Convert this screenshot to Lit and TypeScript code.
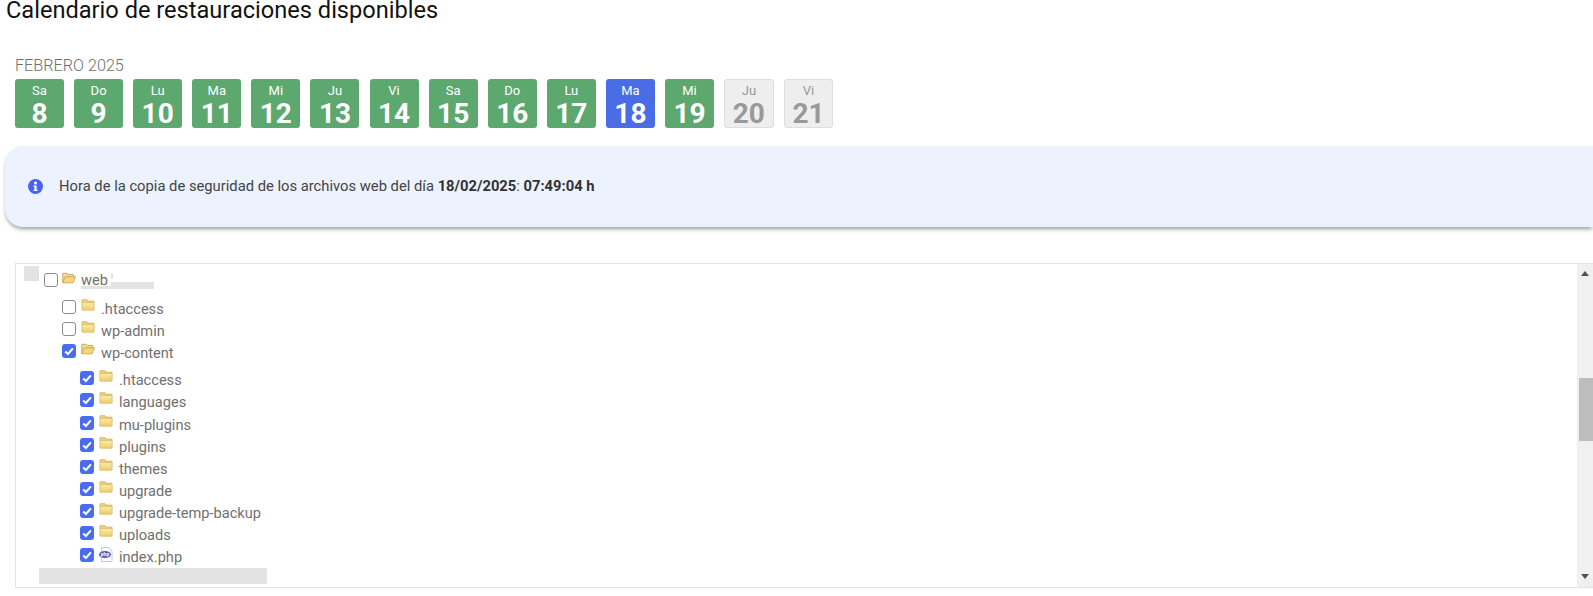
import { LitElement, html, css, svg } from "lit";
import { customElement } from "lit/decorators.js";

type Day = { n: string; d: number; kind: "ok" | "cur" | "off" };
const days: Day[] = [
  { n: "Sa", d: 8, kind: "ok" }, { n: "Do", d: 9, kind: "ok" }, { n: "Lu", d: 10, kind: "ok" },
  { n: "Ma", d: 11, kind: "ok" }, { n: "Mi", d: 12, kind: "ok" }, { n: "Ju", d: 13, kind: "ok" },
  { n: "Vi", d: 14, kind: "ok" }, { n: "Sa", d: 15, kind: "ok" }, { n: "Do", d: 16, kind: "ok" },
  { n: "Lu", d: 17, kind: "ok" }, { n: "Ma", d: 18, kind: "cur" }, { n: "Mi", d: 19, kind: "ok" },
  { n: "Ju", d: 20, kind: "off" }, { n: "Vi", d: 21, kind: "off" },
];

const closedFolder = svg`<svg class="ico" viewBox="0 0 14 12" width="14" height="12">
  <defs><linearGradient id="fc" x1="0" y1="0" x2="0" y2="1"><stop offset="0" stop-color="#fbeeb0"/><stop offset="1" stop-color="#efcd68"/></linearGradient></defs>
  <path d="M1 .8h5l1 1.400h6v8.900H1z" fill="#efd27c" stroke="#d8b864" stroke-width="1"/>
  <rect x="1.500" y="3.500" width="11" height="7.100" fill="url(#fc)"/>
  <path d="M1.500 3.500h11" stroke="#dfc272" stroke-width="1"/>
</svg>`;
const openFolder = svg`<svg class="ico" viewBox="0 0 14 12" width="14" height="12">
  <path d="M.8 10.500V1.300h4.500l1 1.300h5.200V5" fill="#f2dc9a" stroke="#cfa95c" stroke-width="1"/>
  <path d="M.8 10.800 3.200 4.800h10.300l-2.500 6z" fill="#f5d878" stroke="#cfa95c" stroke-width="1"/>
</svg>`;
const phpFile = svg`<svg class="ico" viewBox="0 0 14 15" width="14" height="15">
  <path d="M2.500.5h7l3.500 3.500v10.500h-10.500z" fill="#fbfbfd" stroke="#c9c9d6"/>
  <ellipse cx="6" cy="7.500" rx="6" ry="3.600" fill="#5a5aa0"/>
  <text x="6" y="9.200" font-size="5" font-family="Roboto, sans-serif" font-weight="700" text-anchor="middle" fill="#fff">php</text>
</svg>`;

@customElement("app-root")
export class AppRoot extends LitElement {
  static styles = css`
    :host { display: block; width: 1593px; height: 596px; overflow: hidden; background: #fff; font-family: Roboto, sans-serif; position: relative; }
    h1 { margin: 0; padding-left: 6px; font-size: 23.600px; line-height: 20px; font-weight: 400; color: #111; height: 20px; }
    .month { margin: 36px 0 0 15px; font-size: 16.200px; line-height: 19px; font-weight: 300; color: #6f6f6f; height: 23px; }
    .days { display: flex; gap: 10.100px; padding-left: 15px; }
    .day { width: 49px; height: 49px; box-sizing: border-box; border-radius: 3px; display: flex; flex-direction: column; align-items: center; color: #fff; }
    .ok { background: #5ca86f; }
    .cur { background: #4a6ce4; }
    .off { background: #eeeeee; border: 1px solid #dedede; color: #999; width: 49.500px; }
    .off .nm { margin-top: 3px; }
    .nm { font-size: 13px; line-height: 15px; margin-top: 4px; }
    .num { font-size: 28px; line-height: 28px; font-weight: 700; margin-top: 2px; }
    .info { margin: 18px 0 0 5px; height: 81px; box-sizing: border-box; background: #ecf2fe; border-radius: 18px 0 0 18px; box-shadow: 0 3px 4px -1px rgba(0,0,0,.4); display: flex; align-items: center; padding: 0 0 1px 23px; font-size: 14.750px; color: #444; }
    .info svg { margin-right: 16px; flex: none; }
    .info b { font-weight: 700; color: #333; }
    .tree { position: relative; margin: 36px 0 0 15px; height: 325px; box-sizing: border-box; border: 1px solid #e2e2e2; border-right: 0; overflow: hidden; display: flex; }
    .list { flex: 1; padding: 9px 0 0 28px; font-size: 14.600px; color: #707070; font-weight: 400; }
    .row { display: flex; height: 22.100px; align-items: flex-start; }
    .cb { width: 14px; height: 14px; box-sizing: border-box; border: 1.500px solid #8c8c8c; border-radius: 3px; background: #fff; flex: none; display: block; margin-top: -1px; }
    .cb.on { background: #4a6cf0; border: 0; display: flex; align-items: center; justify-content: center; }
    .ico { flex: none; margin-left: 5px; display: block; margin-top: -2px; }
    .lbl { margin-left: 6px; line-height: 18px; margin-top: -1px; }
    .root .cb { margin-top: 0; }
    .root .ico { margin-top: -1px; margin-left: 4px; }
    .root .lbl { margin-top: -2px; margin-left: 5px; }
    .sub { padding-left: 18px; }
    .sub1 { margin-top: 6px; }
    .sub2 { margin-top: 5px; }
    .bar { width: 16px; flex: none; background: #f0f0f0; position: relative; display: flex; flex-direction: column; justify-content: space-between; align-items: center; padding: 7px 0 8px; box-sizing: border-box; }
    .up { width: 0; height: 0; border: 4px solid transparent; border-top: 0; border-bottom: 5px solid #505050; }
    .down { width: 0; height: 0; border: 4px solid transparent; border-bottom: 0; border-top: 5px solid #505050; }
    .thumb { position: absolute; left: 1.500px; right: 0; top: 114px; height: 62.500px; background: #bdbdbd; }
    .mask { position: absolute; background: #e3e3e3; }
    .m1 { left: 8px; top: 2px; width: 15px; height: 15px; }
    .m2 { left: 95px; top: 18px; width: 43px; height: 7px; }
    .m2b { left: 65px; top: 22px; width: 30px; height: 3px; }
    .m3 { left: 95px; top: 10px; width: 2px; height: 5px; }
    .m4 { left: 23px; top: 304px; width: 228px; height: 16px; }
  `;

  private check() {
    return html`<svg viewBox="0 0 14 14" width="14" height="14"><path d="M3.200 7.400 5.900 10l5-5.600" fill="none" stroke="#fff" stroke-width="2.100"/></svg>`;
  }

  private row(label: string, on: boolean, icon: unknown, root = false) {
    return html`<div class="row ${root ? "root" : ""}">
      <span class="cb ${on ? "on" : ""}">${on ? this.check() : ""}</span>
      ${icon}<span class="lbl">${label}</span>
    </div>`;
  }

  render() {
    const inner = ["languages", "mu-plugins", "plugins", "themes", "upgrade", "upgrade-temp-backup", "uploads"];
    return html`
      <h1>Calendario de restauraciones disponibles</h1>
      <div class="month">FEBRERO 2025</div>
      <div class="days">
        ${days.map((x) => html`<div class="day ${x.kind}"><span class="nm">${x.n}</span><span class="num">${x.d}</span></div>`)}
      </div>
      <div class="info">
        <svg viewBox="0 0 16 16" width="15" height="15">
          <circle cx="8" cy="8" r="8" fill="#4a62ee"/>
          <circle cx="8" cy="4.300" r="1.600" fill="#fff"/>
          <path d="M5.900 6.900h3.300v4.600h1v1.400H5.900v-1.400h1V8.300H5.900z" fill="#fff"/>
        </svg>
        <span>Hora de la copia de seguridad de los archivos web del día <b>18/02/2025</b>: <b>07:49:04 h</b></span>
      </div>
      <div class="tree">
        <div class="list">
          ${this.row("web", false, openFolder, true)}
          <div class="sub sub1">
            ${this.row(".htaccess", false, closedFolder)}
            ${this.row("wp-admin", false, closedFolder)}
            ${this.row("wp-content", true, openFolder)}
            <div class="sub sub2">
              ${this.row(".htaccess", true, closedFolder)}
              ${inner.map((l) => this.row(l, true, closedFolder))}
              ${this.row("index.php", true, phpFile)}
            </div>
          </div>
        </div>
        <div class="bar"><span class="up"></span><span class="down"></span><span class="thumb"></span></div>
        <span class="mask m1"></span><span class="mask m2"></span><span class="mask m2b"></span><span class="mask m3"></span><span class="mask m4"></span>
      </div>
    `;
  }
}
